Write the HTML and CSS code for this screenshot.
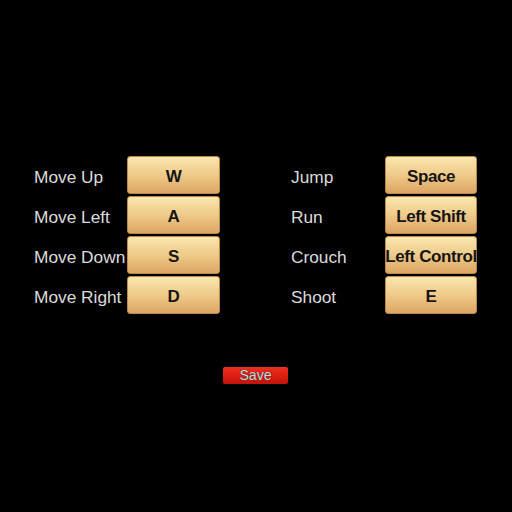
FILE: index.html
```html
<!DOCTYPE html>
<html>
<head>
<meta charset="utf-8">
<link rel="stylesheet" href="styles.css">
</head>
<body>
<div class="page">
  <div class="groups">
    <div class="group">
      <div class="row"><span class="label">Move Up</span><div class="key">W</div></div>
      <div class="row"><span class="label">Move Left</span><div class="key">A</div></div>
      <div class="row"><span class="label">Move Down</span><div class="key">S</div></div>
      <div class="row"><span class="label">Move Right</span><div class="key">D</div></div>
    </div>
    <div class="group right">
      <div class="row"><span class="label">Jump</span><div class="key">Space</div></div>
      <div class="row"><span class="label">Run</span><div class="key">Left Shift</div></div>
      <div class="row"><span class="label">Crouch</span><div class="key">Left Control</div></div>
      <div class="row"><span class="label">Shoot</span><div class="key">E</div></div>
    </div>
  </div>
  <div class="save-wrap"><div class="save">Save</div></div>
</div>
</body>
</html>
```
FILE: styles.css
```css
html, body {
  margin: 0;
  padding: 0;
  background: #000;
  width: 512px;
  height: 512px;
  overflow: hidden;
}
.page {
  padding-top: 156px;
  font-family: "Liberation Sans", Arial, sans-serif;
}
.groups {
  display: flex;
  padding-left: 34px;
  gap: 71px;
}
.group {
  display: flex;
  flex-direction: column;
  gap: 2px;
}
.row {
  display: flex;
  align-items: center;
  height: 38px;
}
.label {
  width: 93px;
  color: #dcdcdc;
  font-size: 17.3px;
  white-space: nowrap;
  padding-top: 4px;
}
.right .label {
  width: 94px;
}
.key {
  box-sizing: border-box;
  width: 93px;
  height: 38px;
  display: flex;
  align-items: center;
  justify-content: center;
  padding-top: 3px;
  border: 1px solid #b98a4c;
  border-radius: 3px;
  background: linear-gradient(to bottom, #f9e6ad 0%, #efca8a 50%, #dca563 100%);
  color: #151515;
  font-weight: bold;
  font-size: 17px;
  letter-spacing: -0.4px;
  white-space: nowrap;
}
.right .key {
  width: 92px;
}
.save-wrap {
  display: flex;
  justify-content: center;
  margin-top: 53px;
  padding-right: 1px;
}
.save {
  width: 65px;
  height: 17px;
  box-sizing: border-box;
  border-radius: 2px;
  background: linear-gradient(to bottom, #f0301f 0%, #d81c10 60%, #bf140b 100%);
  color: #d8d8d8;
  font-size: 14px;
  line-height: 17px;
  text-align: center;
  text-shadow: 0 0 1px #333, 0 0 1px #333;
}
```
